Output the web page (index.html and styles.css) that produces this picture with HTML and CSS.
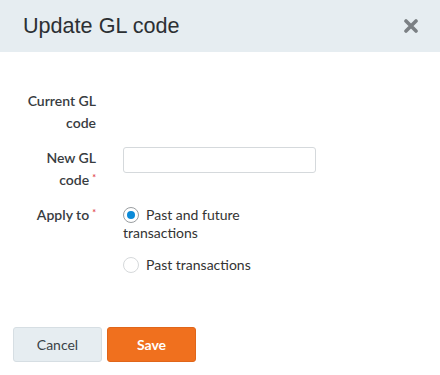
FILE: index.html
```html
<!DOCTYPE html>
<html>
<head>
<meta charset="utf-8">
<link rel="stylesheet" href="styles.css">
</head>
<body>
<div class="modal">
  <div class="header">
    <h1 class="title">Update GL code</h1>
    <span class="close" aria-label="Close">
      <svg width="14" height="14" viewBox="0 0 14 14"><path d="M2 2L12 12M12 2L2 12" stroke="#7b8084" stroke-width="3.6" stroke-linecap="round"/></svg>
    </span>
  </div>
  <div class="body">
    <div class="row">
      <div class="label">Current GL code</div>
      <div class="control"></div>
    </div>
    <div class="row">
      <div class="label required">New GL code</div>
      <div class="control"><input class="input" type="text"></div>
    </div>
    <div class="row">
      <div class="label required">Apply to</div>
      <div class="control options">
        <label class="option"><span class="radio checked"></span>Past and future transactions</label>
        <label class="option"><span class="radio"></span>Past transactions</label>
      </div>
    </div>
  </div>
  <div class="footer">
    <button class="btn cancel">Cancel</button>
    <button class="btn save">Save</button>
  </div>
</div>
</body>
</html>
```
FILE: styles.css
```css
html, body {
  margin: 0;
  padding: 0;
  background: #fff;
}
.modal {
  width: 440px;
  height: 375px;
  font-family: Lato, "Open Sans", sans-serif;
  color: #333;
}
.header {
  height: 52px;
  background: #e6edf1;
  display: flex;
  align-items: center;
  justify-content: space-between;
  padding: 0 22px 0 23px;
  box-sizing: border-box;
}
.title {
  margin: 0;
  font-family: "Liberation Sans", Arial, sans-serif;
  font-weight: normal;
  font-size: 21.6px;
  color: #2c3033;
}
.close {
  display: flex;
  width: 14px;
  height: 14px;
}
.body {
  padding: 38px 0 0 20px;
  display: flex;
  flex-direction: column;
  gap: 13px;
}
.row {
  display: grid;
  grid-template-columns: 76px 193px;
  column-gap: 27px;
  align-items: start;
}
.label {
  text-align: right;
  font-size: 14px;
  line-height: 22px;
  font-weight: 600;
  color: #383c3f;
}
.label.required::after {
  content: "*";
  color: #e0444e;
  font-size: 9px;
  line-height: 10px;
  position: relative;
  top: -4px;
  margin-left: 3px;
}
.input {
  display: block;
  width: 193px;
  height: 26px;
  box-sizing: border-box;
  border: 1px solid #d5d9dc;
  border-radius: 3px;
  margin: 0;
}
.options {
  display: flex;
  flex-direction: column;
  gap: 14px;
  padding-top: 2px;
}
.option {
  font-size: 14px;
  line-height: 18px;
  color: #333;
}
.radio {
  display: inline-block;
  width: 16px;
  height: 16px;
  box-sizing: border-box;
  border: 1px solid #d6d9db;
  border-radius: 50%;
  vertical-align: -3px;
  margin-right: 7px;
  position: relative;
}
.radio.checked {
  border-color: #9a9ea1;
}
.radio.checked::after {
  content: "";
  position: absolute;
  left: 3px;
  top: 3px;
  width: 8px;
  height: 8px;
  border-radius: 50%;
  background: #0b8ad8;
}
.footer {
  margin-top: 53px;
  padding-left: 13px;
  display: flex;
  gap: 5px;
}
.btn {
  width: 89px;
  height: 35px;
  border-radius: 3px;
  font-family: Lato, "Open Sans", sans-serif;
  font-size: 14px;
  cursor: pointer;
}
.cancel {
  background: #e6edf1;
  border: 1px solid #d6dee3;
  color: #3a4247;
}
.save {
  background: #f0701e;
  border: 1px solid #e0661a;
  color: #fff;
  font-weight: bold;
}
```
